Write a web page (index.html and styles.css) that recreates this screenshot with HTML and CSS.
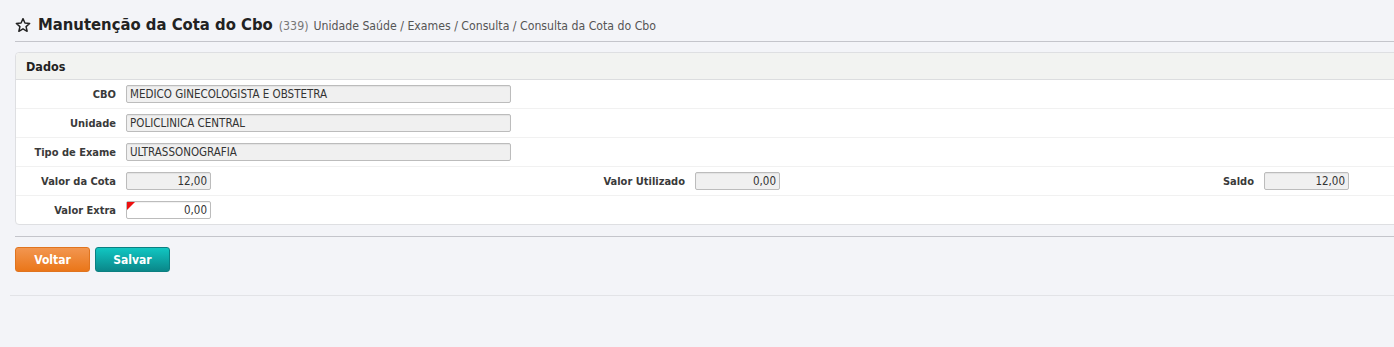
FILE: index.html
```html
<!DOCTYPE html>
<html lang="pt-BR">
<head>
  <meta charset="UTF-8">
  <title>Manutenção da Cota do Cbo</title>
  <link rel="stylesheet" href="styles.css">
</head>
<body>
  <div class="page">
    <div class="title-bar">
      <svg class="star" width="16" height="16" viewBox="0 0 24 24">
        <path d="M12 2.5l2.9 6.6 7.1.6-5.4 4.7 1.6 7-6.2-3.7-6.2 3.7 1.6-7L2 9.7l7.1-.6z" fill="none" stroke="#222" stroke-width="2.2" stroke-linejoin="round"/>
      </svg>
      <h1>Manutenção da Cota do Cbo</h1>
      <span class="code">(339)</span>
      <span class="crumbs">Unidade Saúde / Exames / Consulta / Consulta da Cota do Cbo</span>
    </div>

    <div class="panel">
      <div class="panel-head">Dados</div>
      <div class="row">
        <div class="field">
          <label>CBO</label>
          <input class="wide" type="text" value="MEDICO GINECOLOGISTA E OBSTETRA" disabled>
        </div>
      </div>
      <div class="row">
        <div class="field">
          <label>Unidade</label>
          <input class="wide" type="text" value="POLICLINICA CENTRAL" disabled>
        </div>
      </div>
      <div class="row">
        <div class="field">
          <label>Tipo de Exame</label>
          <input class="wide" type="text" value="ULTRASSONOGRAFIA" disabled>
        </div>
      </div>
      <div class="row cols">
        <div class="field">
          <label>Valor da Cota</label>
          <input class="num" type="text" value="12,00" disabled>
        </div>
        <div class="field">
          <label>Valor Utilizado</label>
          <input class="num" type="text" value="0,00" disabled>
        </div>
        <div class="field">
          <label>Saldo</label>
          <input class="num" type="text" value="12,00" disabled>
        </div>
      </div>
      <div class="row">
        <div class="field">
          <label>Valor Extra</label>
          <span class="required">
            <input class="num edit" type="text" value="0,00">
          </span>
        </div>
      </div>
    </div>

    <div class="actions">
      <button class="btn orange">Voltar</button>
      <button class="btn teal">Salvar</button>
    </div>
    <div class="footer-line"></div>
  </div>
</body>
</html>
```

FILE: styles.css
```css
* {
  box-sizing: border-box;
}
html, body {
  margin: 0;
  padding: 0;
  overflow: hidden;
  background: #f3f4f8;
}
body {
  font-family: "DejaVu Sans Condensed", "DejaVu Sans", sans-serif;
  font-size: 11px;
  color: #333;
}
.page {
  width: 1740px;
}
.title-bar {
  display: flex;
  align-items: baseline;
  margin-left: 15px;
  padding: 15px 0 7px 0;
  border-bottom: 1px solid #c4c5cb;
}
.title-bar .star {
  align-self: center;
  margin-right: 7px;
}
.title-bar h1 {
  margin: 0;
  font-family: "DejaVu Sans Condensed", "DejaVu Sans", sans-serif;
  font-size: 16.5px;
  font-weight: bold;
  color: #222;
}
.title-bar .code {
  margin-left: 6px;
  color: #777;
  font-size: 12.3px;
}
.title-bar .crumbs {
  margin-left: 5px;
  color: #555;
  font-size: 12.2px;
}

.panel {
  margin: 10px 0 0 15px;
  background: #fff;
  border: 1px solid #dedfe2;
  border-radius: 4px 0 0 4px;
}
.panel-head {
  height: 27px;
  line-height: 27px;
  padding-left: 10px;
  background: #f2f3f1;
  border-bottom: 1px solid #dcdddf;
  border-radius: 4px 0 0 0;
  font-size: 12.5px;
  font-weight: bold;
  color: #222;
}
.row {
  display: flex;
  height: 29px;
  align-items: center;
  border-bottom: 1px solid #f1f1f1;
}
.row:last-child {
  border-bottom: 0;
  height: 28px;
}
.field {
  display: flex;
  align-items: center;
  width: 569px;
}
.field label {
  width: 100px;
  text-align: right;
  margin-right: 10px;
  font-weight: bold;
  color: #3a3a3a;
}
input {
  font-family: "DejaVu Sans Condensed", "DejaVu Sans", sans-serif;
  font-size: 11.5px;
  color: #333;
  height: 18px;
  padding: 0 3px;
  border: 1px solid #bcbcbc;
  border-radius: 2px;
  background: #f0f0f0;
  box-shadow: inset 0 1px 1px rgba(0, 0, 0, 0.06);
  margin: 0;
}
input:disabled {
  color: #333;
}
input.wide {
  width: 385px;
}
input.num {
  width: 85px;
  text-align: right;
}
input.edit {
  background: #fff;
}
.required {
  position: relative;
  display: inline-block;
}
.required::before {
  content: "";
  position: absolute;
  left: 1px;
  top: 1px;
  border-top: 8px solid #ee0f0f;
  border-right: 8px solid transparent;
}

.actions {
  margin: 11px 0 0 15px;
  padding-top: 10px;
  border-top: 1px solid #c4c5cb;
  display: flex;
  gap: 5px;
  height: 59px;
}
.btn {
  height: 25px;
  width: 75px;
  border-radius: 3px;
  color: #fff;
  font-family: "DejaVu Sans Condensed", "DejaVu Sans", sans-serif;
  font-weight: bold;
  font-size: 12px;
  cursor: pointer;
}
.btn.orange {
  background: linear-gradient(#f29650, #ea7619);
  border: 1px solid #e0741f;
}
.btn.teal {
  background: linear-gradient(#11c6c2, #0a8789);
  border: 1px solid #0b7f81;
}
.footer-line {
  margin-left: 10px;
  border-top: 1px solid #e2e3e7;
}
```
